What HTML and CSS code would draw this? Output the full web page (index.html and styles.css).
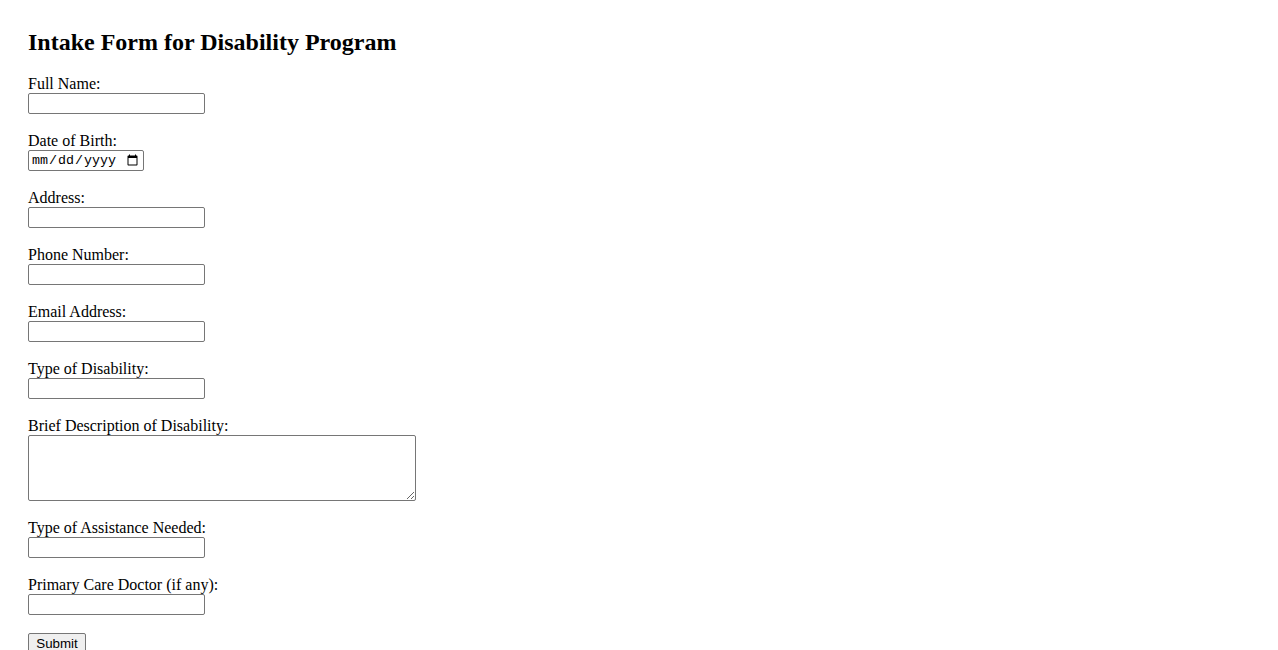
FILE: index.html
```html
<!DOCTYPE html>
<html lang="en">
<head>
<meta charset="utf-8">
<title>Intake Form for Disability Program</title>
<link rel="stylesheet" href="styles.css">
</head>
<body>
<main class="page">
  <h2 class="title">Intake Form for Disability Program</h2>
  <form class="form">
    <div class="field"><label class="label" for="name">Full Name:</label><input class="text" id="name" type="text"></div>
    <div class="field"><label class="label" for="dob">Date of Birth:</label><input class="date" id="dob" type="date"></div>
    <div class="field"><label class="label" for="addr">Address:</label><input class="text" id="addr" type="text"></div>
    <div class="field"><label class="label" for="phone">Phone Number:</label><input class="text" id="phone" type="tel"></div>
    <div class="field"><label class="label" for="email">Email Address:</label><input class="text" id="email" type="email"></div>
    <div class="field"><label class="label" for="type">Type of Disability:</label><input class="text" id="type" type="text"></div>
    <div class="field"><label class="label" for="desc">Brief Description of Disability:</label><textarea class="area" id="desc"></textarea></div>
    <div class="field"><label class="label" for="assist">Type of Assistance Needed:</label><input class="text" id="assist" type="text"></div>
    <div class="field"><label class="label" for="doctor">Primary Care Doctor (if any):</label><input class="text" id="doctor" type="text"></div>
    <div class="actions"><button class="submit" type="submit">Submit</button></div>
  </form>
</main>
</body>
</html>
```
FILE: styles.css
```css
html, body {
  margin: 0;
  padding: 0;
  background: #ffffff;
}
body {
  font-family: "Liberation Serif", "Times New Roman", serif;
  font-size: 16px;
  color: #000000;
}
.page {
  padding: 28px;
}
.title {
  margin: 0 0 19px 0;
  font-size: 24px;
  line-height: 28px;
  font-weight: bold;
}
.form {
  display: flex;
  flex-direction: column;
  align-items: flex-start;
}
.field {
  display: flex;
  flex-direction: column;
  align-items: flex-start;
  margin-bottom: 18px;
}
.label {
  display: block;
  line-height: 18px;
  height: 18px;
}
.text, .date, .area {
  box-sizing: border-box;
  margin: 0;
  border: 1px solid #767676;
  border-radius: 2px;
  background: #ffffff;
  color: #000000;
}
.text {
  width: 177px;
  height: 21px;
  padding: 1px 2px;
  font-family: "Liberation Sans", Arial, sans-serif;
  font-size: 13.33px;
}
.date {
  width: 116px;
  height: 21px;
  padding: 1px 2px;
  font-family: "Liberation Mono", "Courier New", monospace;
  font-size: 13.33px;
}
.area {
  display: block;
  width: 388px;
  height: 66px;
  padding: 2px;
  font-family: "Liberation Mono", monospace;
  font-size: 13.33px;
  resize: both;
}
.actions {
  display: flex;
}
.submit {
  box-sizing: border-box;
  margin: 0;
  height: 21px;
  width: 58px;
  padding: 1px 6px;
  border: 1px solid #767676;
  border-radius: 2px;
  background: #efefef;
  color: #000000;
  font-family: "Liberation Sans", Arial, sans-serif;
  font-size: 13.33px;
}
```
